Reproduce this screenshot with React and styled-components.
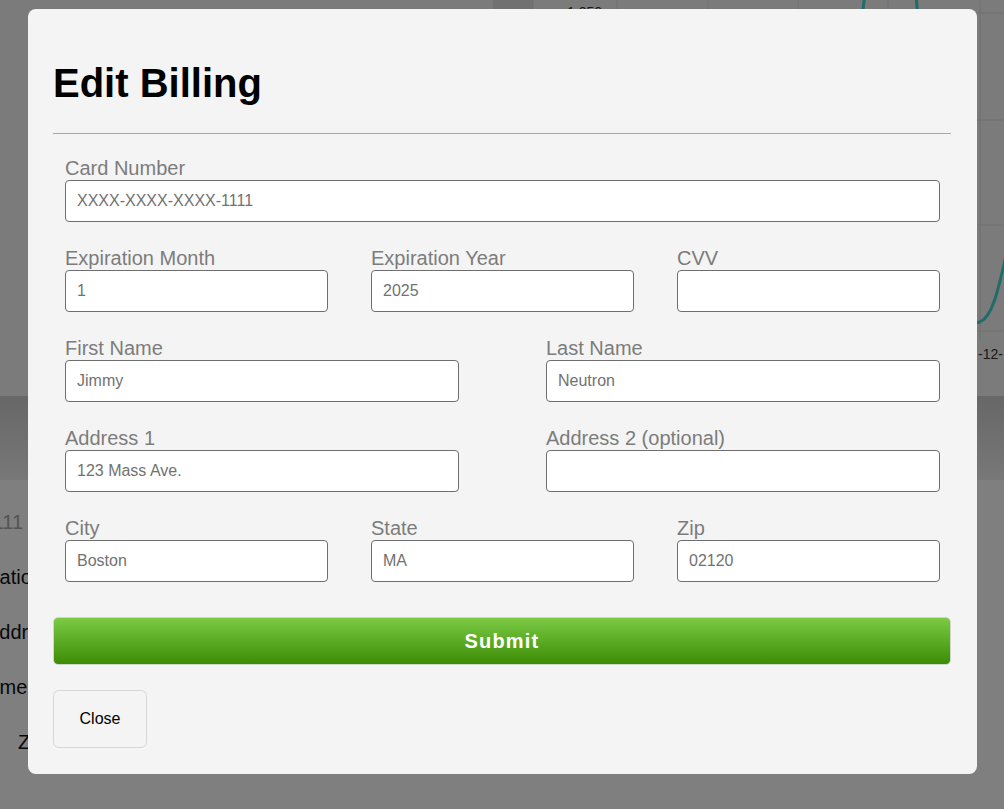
import React from "react";
import styled, { createGlobalStyle } from "styled-components";

const GlobalStyle = createGlobalStyle`
  html, body {
    margin: 0;
    padding: 0;
    background: #ffffff;
    font-family: "Liberation Sans", Arial, sans-serif;
  }
  * {
    box-sizing: border-box;
  }
`;

// --- page behind the modal ---
const Page = styled.div`
  width: 1004px;
  height: 809px;
  overflow: hidden;
  background: #ffffff;
`;
const ChartPanel = styled.div`
  height: 396px;
  background: #f6f6f6;
`;
const TabBand = styled.div`
  height: 84px;
  background: linear-gradient(#cfcfcf, #f0f0f0);
`;
const DetailList = styled.div`
  padding-top: 15px;
`;
const DetailRow = styled.div`
  height: 55px;
  line-height: 55px;
  font-size: 20px;
  white-space: nowrap;
  color: ${(props) => (props.muted ? "#a8a8a8" : "#111")};
  margin-left: ${(props) => props.offset}px;
`;

// --- modal ---
const Overlay = styled.div`
  position: fixed;
  inset: 0;
  background: rgba(0, 0, 0, 0.5);
  display: flex;
  align-items: flex-start;
  padding: 9px 0 0 28px;
`;
const Modal = styled.div`
  width: 949px;
  background: #f4f4f4;
  border-radius: 8px;
  padding: 0 26px 26px 25px;
`;
const Title = styled.h2`
  margin: 0;
  padding-top: 51px;
  font-size: 40px;
  line-height: 46px;
  font-weight: bold;
  color: #000;
`;
const Divider = styled.hr`
  margin: 27px 0 0;
  border: none;
  border-top: 1px solid #a8a8a8;
`;
const Form = styled.form`
  padding: 23px 11px 0 12px;
`;
const Row = styled.div`
  display: grid;
  grid-template-columns: repeat(${(props) => props.cols}, 1fr);
  column-gap: ${(props) => (props.cols === 3 ? 43 : 87)}px;
  margin-bottom: 25px;
`;
const Field = styled.label`
  display: flex;
  flex-direction: column;
`;
const Label = styled.span`
  font-size: 20px;
  line-height: 23px;
  color: #7c7c7c;
`;
const Input = styled.input`
  height: 42px;
  width: 100%;
  border: 1px solid #6e6e6e;
  border-radius: 4px;
  background: #fff;
  padding: 0 11px;
  font-family: "Liberation Sans", Arial, sans-serif;
  font-size: 16px;
  color: #727272;
  outline: none;
`;
const Actions = styled.div`
  padding-top: 10px;
  display: flex;
  flex-direction: column;
  align-items: flex-start;
  gap: 25px;
`;
const SubmitButton = styled.button`
  width: 100%;
  height: 48px;
  border: 1px solid #cfd6cb;
  border-radius: 5px;
  background: linear-gradient(#7bca45, #3d8c05);
  color: #fff;
  font-family: "Liberation Sans", Arial, sans-serif;
  font-size: 20px;
  font-weight: bold;
  letter-spacing: 1.2px;
  cursor: pointer;
`;
const CloseButton = styled.button`
  width: 94px;
  height: 58px;
  border: 1px solid #d6d6d6;
  border-radius: 6px;
  background: #f4f4f4;
  color: #000;
  font-family: "Liberation Sans", Arial, sans-serif;
  font-size: 16px;
  cursor: pointer;
`;

const Chart = () => (
  <svg width="1004" height="396" viewBox="0 0 1004 396">
    <rect x="493" y="0" width="40" height="396" fill="#e2e2e2" />
    {[533, 617, 708, 798, 888, 980].map((x) => (
      <line key={x} x1={x} y1="0" x2={x} y2="340" stroke="#e0e0e0" strokeWidth="1" />
    ))}
    {[13, 120, 225, 331].map((y) => (
      <line key={y} x1="533" y1={y} x2="1004" y2={y} stroke="#e0e0e0" strokeWidth="1" />
    ))}
    <text x="567" y="17" fontSize="14" fill="#333" fontFamily="Liberation Sans, sans-serif">
      1,050
    </text>
    <text x="978" y="359" fontSize="14" fill="#333" fontFamily="Liberation Sans, sans-serif">
      -12-
    </text>
    <path
      d="M 850 200 C 856 100, 858 -60, 890 -60 C 920 -60, 914 -10, 925 120 C 940 280, 962 328, 980 322 C 995 315, 1000 280, 1012 230"
      fill="none"
      stroke="#3ed8d0"
      strokeWidth="3"
    />
  </svg>
);

const fields = [
  { cols: 1, items: [{ label: "Card Number", value: "XXXX-XXXX-XXXX-1111" }] },
  {
    cols: 3,
    items: [
      { label: "Expiration Month", value: "1" },
      { label: "Expiration Year", value: "2025" },
      { label: "CVV", value: "" },
    ],
  },
  {
    cols: 2,
    items: [
      { label: "First Name", value: "Jimmy" },
      { label: "Last Name", value: "Neutron" },
    ],
  },
  {
    cols: 2,
    items: [
      { label: "Address 1", value: "123 Mass Ave." },
      { label: "Address 2 (optional)", value: "" },
    ],
  },
  {
    cols: 3,
    items: [
      { label: "City", value: "Boston" },
      { label: "State", value: "MA" },
      { label: "Zip", value: "02120" },
    ],
  },
];

const App = () => {
  return (
    <>
      <GlobalStyle />
      <Page>
        <ChartPanel>
          <Chart />
        </ChartPanel>
        <TabBand />
        <DetailList>
          <DetailRow muted offset={-197}>XXXX-XXXX-XXXX-1111</DetailRow>
          <DetailRow offset={-46}>Expiration</DetailRow>
          <DetailRow offset={-14}>Address</DetailRow>
          <DetailRow offset={-26}>Name</DetailRow>
          <DetailRow offset={18}>Zip</DetailRow>
        </DetailList>
      </Page>
      <Overlay>
        <Modal>
          <Title>Edit Billing</Title>
          <Divider />
          <Form onSubmit={(e) => e.preventDefault()}>
            {fields.map((row, i) => (
              <Row key={i} cols={row.cols}>
                {row.items.map((f) => (
                  <Field key={f.label}>
                    <Label>{f.label}</Label>
                    <Input defaultValue={f.value} />
                  </Field>
                ))}
              </Row>
            ))}
          </Form>
          <Actions>
            <SubmitButton type="button">Submit</SubmitButton>
            <CloseButton type="button">Close</CloseButton>
          </Actions>
        </Modal>
      </Overlay>
    </>
  );
};

export default App;
